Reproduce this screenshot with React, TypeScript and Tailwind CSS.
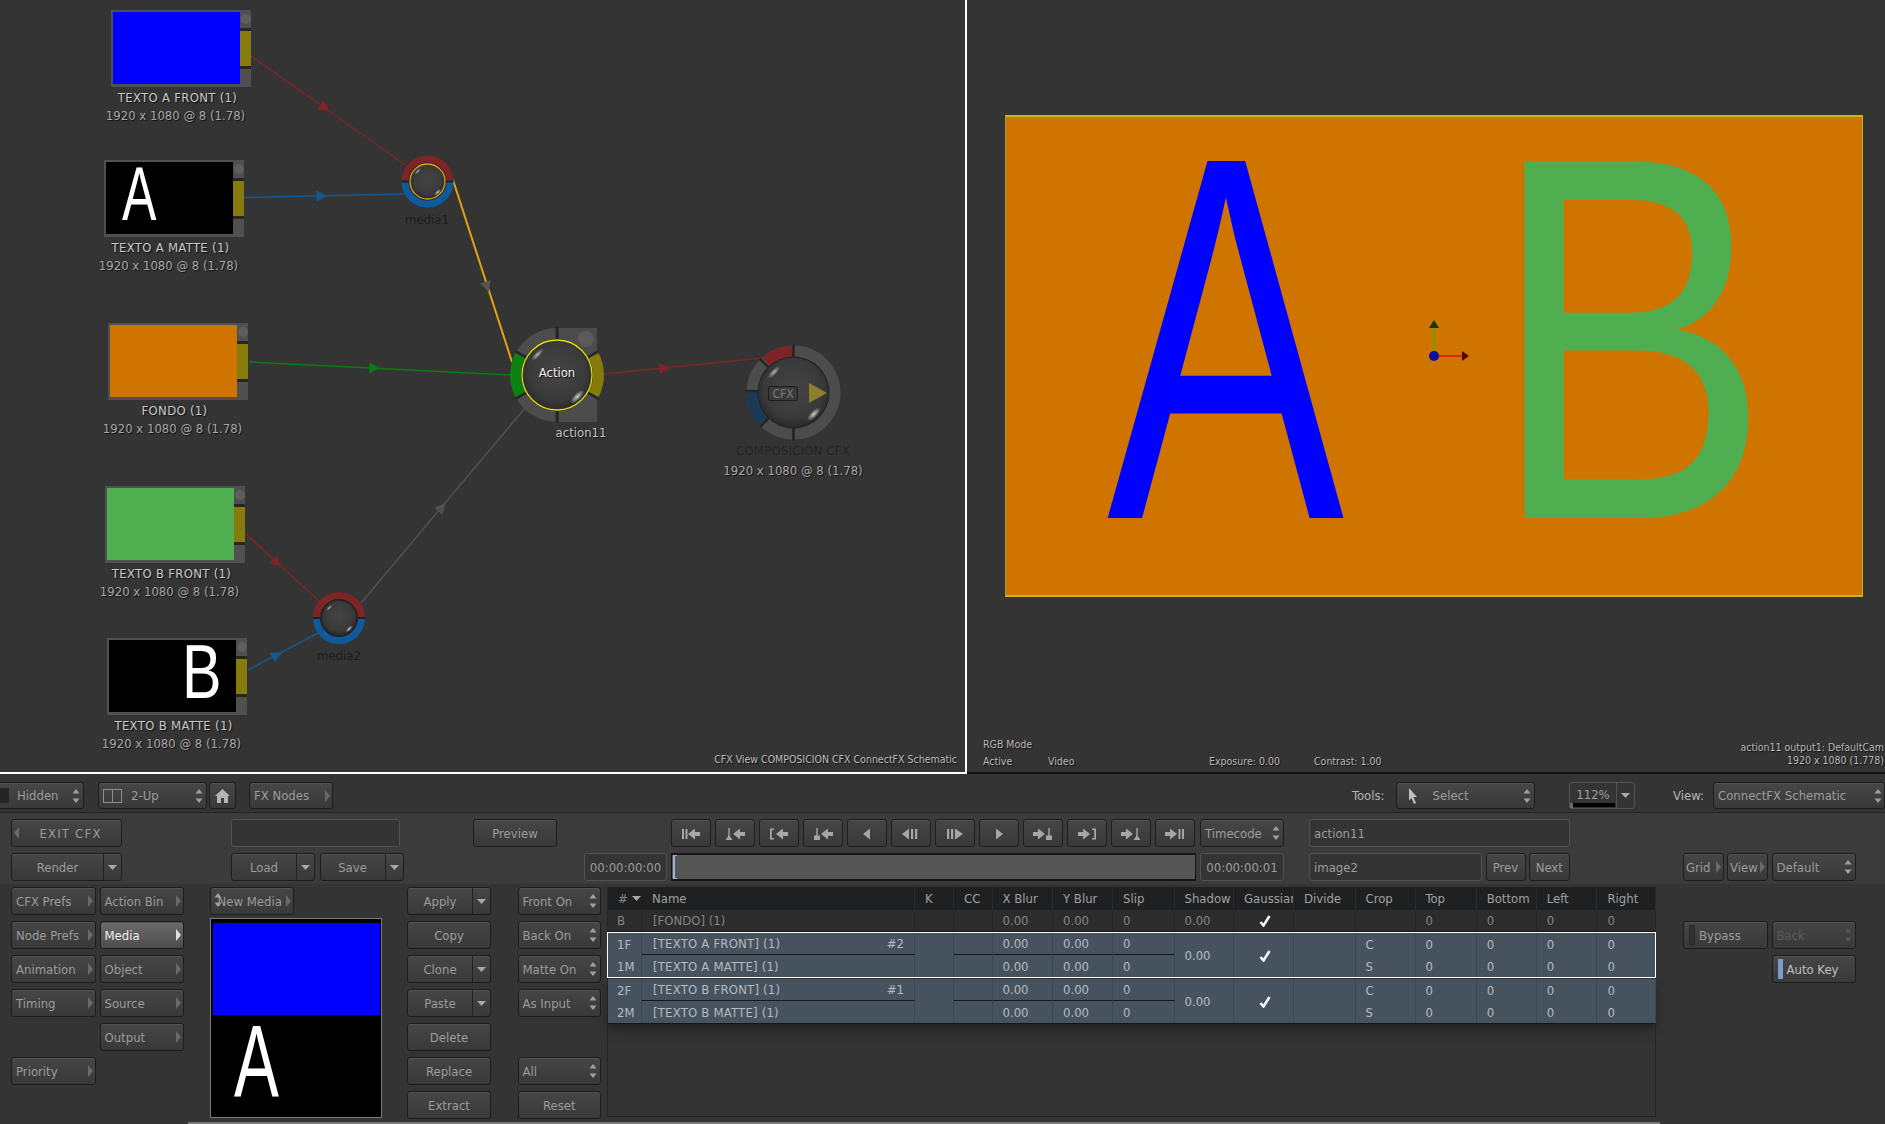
// Flame-style ConnectFX schematic: node canvas, result viewer and the control panel below.
import type { ReactNode } from "react";

const FONT = "font-['DejaVu_Sans_Condensed','DejaVu_Sans',sans-serif] [font-stretch:condensed]";
const BIG = "font-['Liberation_Sans',sans-serif]";
const SHADOW = "[text-shadow:1px_1px_1px_#111]";

/* ---------- little glyphs ---------- */

function Spin({ dim }: { dim?: boolean }) {
  const c = dim ? "#555" : "#a0a0a0";
  return (
    <svg width="8" height="14" viewBox="0 0 8 14" className="shrink-0">
      <path d="M4 0 L7.5 4.5 H.5 Z" fill={c} />
      <path d="M4 14 L7.5 9.5 H.5 Z" fill={c} />
    </svg>
  );
}

function RightTri({ light }: { light?: boolean }) {
  return (
    <svg width="5" height="12" viewBox="0 0 5 12" className="shrink-0">
      <path d="M0 0 L5 6 L0 12 Z" fill={light ? "#e0e0e0" : "#6a6a6a"} />
    </svg>
  );
}

function DownTri() {
  return (
    <svg width="9" height="5" viewBox="0 0 9 5">
      <path d="M0 0 H9 L4.5 5 Z" fill="#a8a8a8" />
    </svg>
  );
}

type BtnProps = {
  label?: ReactNode;
  w: string;
  kind?: "plain" | "arrow" | "spin" | "drop";
  active?: boolean;
  dim?: boolean;
  h?: string;
  className?: string;
};

function Btn({ label, w, kind = "plain", active, dim, h = "h-7", className = "" }: BtnProps) {
  const skin = active
    ? "from-[#6c6c6c] to-[#4c4c4c] text-[#f0f0f0]"
    : "from-[#464646] to-[#393939] " + (dim ? "text-[#5c5c5c]" : "text-[#9c9c9c]");
  const base = `${w} ${h} ${className} shrink-0 flex items-center rounded-[3px] border border-[#1d1d1d] bg-gradient-to-b ${skin} shadow-[inset_0_1px_0_#525252] text-[13px]`;
  // the taller panel buttons sit their text a pixel lower than the top bar
  const nudge = h === "h-7" ? "relative top-[1px]" : "";
  if (kind === "drop") {
    return (
      <div className={base}>
        <div className={`flex-1 text-center ${nudge}`}>{label}</div>
        <div className="w-[18px] h-full border-l border-[#222] flex items-center justify-center">
          <DownTri />
        </div>
      </div>
    );
  }
  if (kind === "arrow") {
    return (
      <div className={`${base} pl-1 pr-[2px] justify-between whitespace-nowrap`}>
        <span className={nudge}>{label}</span>
        <RightTri light={active} />
      </div>
    );
  }
  if (kind === "spin") {
    return (
      <div className={`${base} pl-1 pr-[3px] justify-between`}>
        <span className={nudge}>{label}</span>
        <Spin dim={dim} />
      </div>
    );
  }
  return (
    <div className={`${base} justify-center`}>
      <span className={`flex ${nudge}`}>{label}</span>
    </div>
  );
}

function Field({ w, text, center }: { w: string; text?: string; center?: boolean }) {
  return (
    <div
      className={`${w} h-7 shrink-0 flex items-center rounded-[3px] border border-[#525252] bg-[#343434] text-[13px] text-[#9c9c9c] ${
        center ? "justify-center" : "pl-1"
      }`}
    >
      <span className="relative top-[1px]">{text}</span>
    </div>
  );
}

/* ---------- transport icons ---------- */

const G = "#a6a6a6";
const arrowL = (x: number) => `M${x} 7 L${x + 7} 1.5 V5 H${x + 12} V9 H${x + 7} V12.5 Z`;
const arrowR = (x: number) => `M${x + 12} 7 L${x + 5} 1.5 V5 H${x} V9 H${x + 5} V12.5 Z`;

const TRANSPORT: ReactNode[] = [
  <>
    <rect x="3" y="2" width="2" height="10" fill={G} />
    <rect x="6.5" y="2" width="2" height="10" fill={G} />
    <path d={arrowL(9)} fill={G} />
  </>,
  <>
    <rect x="5.3" y="1" width="1.4" height="9" fill={G} />
    <path d="M2.5 13 L6 8 L9.5 13 Z" fill={G} />
    <path d={arrowL(10)} fill={G} />
  </>,
  <>
    <path d="M3 1.5 H7 V3 H4.8 V11 H7 V12.5 H3 Z" fill={G} />
    <path d={arrowL(9)} fill={G} />
  </>,
  <>
    <rect x="5.3" y="1" width="1.4" height="8" fill={G} />
    <rect x="3" y="8.5" width="6" height="4.5" fill={G} />
    <path d={arrowL(10)} fill={G} />
  </>,
  <path d="M8 7 L15 1.5 V12.5 Z" fill={G} />,
  <>
    <path d="M3 7 L10 1.5 V12.5 Z" fill={G} />
    <rect x="12" y="2" width="2.2" height="10" fill={G} />
    <rect x="16" y="2" width="2.2" height="10" fill={G} />
  </>,
  <>
    <rect x="4" y="2" width="2.2" height="10" fill={G} />
    <rect x="8" y="2" width="2.2" height="10" fill={G} />
    <path d="M12 1.5 L20 7 L12 12.5 Z" fill={G} />
  </>,
  <path d="M9 1.5 L16 7 L9 12.5 Z" fill={G} />,
  <>
    <path d={arrowR(2)} fill={G} />
    <rect x="17.3" y="1" width="1.4" height="8" fill={G} />
    <rect x="15" y="8.5" width="6" height="4.5" fill={G} />
  </>,
  <>
    <path d={arrowR(3)} fill={G} />
    <path d="M21 1.5 H17 V3 H19.2 V11 H17 V12.5 H21 Z" fill={G} />
  </>,
  <>
    <path d={arrowR(2)} fill={G} />
    <rect x="17.3" y="1" width="1.4" height="9" fill={G} />
    <path d="M14.5 13 L18 8 L21.5 13 Z" fill={G} />
  </>,
  <>
    <path d={arrowR(2)} fill={G} />
    <rect x="15.5" y="2" width="2" height="10" fill={G} />
    <rect x="19" y="2" width="2" height="10" fill={G} />
  </>,
];

/* ---------- schematic ---------- */

type Wire = { from: [number, number]; to: [number, number]; at: [number, number]; c: string; arrow?: string; sw?: number };

const WIRES: Wire[] = [
  { from: [251, 56], to: [407, 166], at: [325, 108], c: "#7e2426" },
  { from: [244, 197.5], to: [405, 194], at: [322, 196], c: "#14588f" },
  { from: [453, 180], to: [512, 362], at: [487, 287], c: "#e6a110", arrow: "#565650", sw: 2 },
  { from: [249, 362], to: [511, 375], at: [375, 368], c: "#0c7a12" },
  { from: [361, 603], to: [525, 408], at: [442, 507], c: "#505050" },
  { from: [245, 533], to: [320, 602], at: [277, 563], c: "#7e2426" },
  { from: [248, 670], to: [318, 633], at: [277, 655], c: "#14588f" },
  { from: [604, 374], to: [763, 358], at: [665, 368], c: "#7e2426" },
];

function arrowHead(w: Wire) {
  const dx = w.to[0] - w.from[0];
  const dy = w.to[1] - w.from[1];
  const l = Math.hypot(dx, dy);
  const ux = dx / l;
  const uy = dy / l;
  const [x, y] = w.at;
  return [
    [x + ux * 5.5, y + uy * 5.5],
    [x - ux * 5.5 - uy * 5.5, y - uy * 5.5 + ux * 5.5],
    [x - ux * 5.5 + uy * 5.5, y - uy * 5.5 - ux * 5.5],
  ]
    .map((p) => p.join(","))
    .join(" ");
}

function arc(cx: number, cy: number, r: number, a0: number, a1: number) {
  const p = (a: number) => [cx + r * Math.cos((a * Math.PI) / 180), cy - r * Math.sin((a * Math.PI) / 180)];
  const [x0, y0] = p(a0);
  const [x1, y1] = p(a1);
  const large = Math.abs(a1 - a0) > 180 ? 1 : 0;
  return `M${x0} ${y0} A${r} ${r} 0 ${large} 0 ${x1} ${y1}`;
}

function Ball({ cx, cy, r, ring }: { cx: number; cy: number; r: number; ring?: string }) {
  const tx = cx - r * 0.56;
  const ty = cy - r * 0.58;
  const bx = cx + r * 0.58;
  const by = cy + r * 0.62;
  return (
    <g>
      <circle cx={cx} cy={cy} r={r + 1} fill="#222" />
      <circle cx={cx} cy={cy} r={r} fill="url(#ballBase)" />
      <ellipse cx={tx} cy={ty} rx={r * 0.24} ry={r * 0.08} fill="url(#ballGlint)" opacity={0.7} transform={`rotate(-45 ${tx} ${ty})`} />
      <ellipse cx={bx} cy={by} rx={r * 0.26} ry={r * 0.1} fill="url(#ballGlint)" opacity={0.85} transform={`rotate(-45 ${bx} ${by})`} />
      {ring && <circle cx={cx} cy={cy} r={r} fill="none" stroke={ring} strokeWidth={1.3} />}
    </g>
  );
}

function MediaRing({ cx, cy, ring }: { cx: number; cy: number; ring?: string }) {
  return (
    <g>
      <circle cx={cx} cy={cy} r={21} fill="#222" />
      <path d={arc(cx, cy, 22.5, 0, 180)} fill="none" stroke="#7e2426" strokeWidth={7} />
      <path d={arc(cx, cy, 22.5, 180, 360)} fill="none" stroke="#0f5a9c" strokeWidth={7} />
      <rect x={cx - 26} y={cy - 1} width={52} height={2} fill="#222" />
      <Ball cx={cx} cy={cy} r={17.5} ring={ring} />
    </g>
  );
}

function Tick({ cx, cy, a }: { cx: number; cy: number; a: number }) {
  const c = Math.cos((a * Math.PI) / 180);
  const s = Math.sin((a * Math.PI) / 180);
  return <line x1={cx + 34 * c} y1={cy - 34 * s} x2={cx + 48 * c} y2={cy - 48 * s} stroke="#262626" strokeWidth={2.4} />;
}

function Diagram() {
  return (
    <svg width="966" height="772" className="absolute left-0 top-0">
      <defs>
        <radialGradient id="ballBase" cx="50%" cy="45%" r="58%">
          <stop offset="0%" stopColor="#454545" />
          <stop offset="70%" stopColor="#3a3a3a" />
          <stop offset="100%" stopColor="#262626" />
        </radialGradient>
        <radialGradient id="ballGlint">
          <stop offset="0%" stopColor="#e8e8e8" />
          <stop offset="100%" stopColor="#e8e8e8" stopOpacity="0" />
        </radialGradient>
      </defs>

      {WIRES.map((w, i) => (
        <g key={i}>
          <line x1={w.from[0]} y1={w.from[1]} x2={w.to[0]} y2={w.to[1]} stroke={w.c} strokeWidth={w.sw ?? 1.5} />
          <polygon points={arrowHead(w)} fill={w.arrow ?? w.c} />
        </g>
      ))}

      <MediaRing cx={427.5} cy={181.5} ring="#e6a110" />
      <MediaRing cx={339} cy={618} />

      {/* Action node */}
      <path d="M559 328 H597 V352 L559 375 Z" fill="#4c4c4c" />
      <path d="M559 422 H597 V398 L559 375 Z" fill="#4c4c4c" />
      <circle cx={586} cy={339} r={8} fill="#5a5a5a" />
      <path d={arc(557, 375, 41, 92, 150)} fill="none" stroke="#4c4c4c" strokeWidth={12} />
      <path d={arc(557, 375, 41, 210, 268)} fill="none" stroke="#4c4c4c" strokeWidth={12} />
      <path d={arc(557, 375, 41, 152, 208)} fill="none" stroke="#0c8212" strokeWidth={12} />
      <path d={arc(557, 375, 41, -28, 28)} fill="none" stroke="#857a0c" strokeWidth={12} />
      {[90, 150, 210, 270, 30, -30].map((a) => (
        <Tick key={a} cx={557} cy={375} a={a} />
      ))}
      <Ball cx={557} cy={375} r={35} ring="#e4e00c" />

      {/* CFX output node */}
      <path d={arc(793.5, 392.5, 41, 92, 268)} fill="none" stroke="#4c4c4c" strokeWidth={12} />
      <path d={arc(793.5, 392.5, 41, -88, 88)} fill="none" stroke="#4c4c4c" strokeWidth={12} />
      <path d={arc(793.5, 392.5, 41, 92, 132)} fill="none" stroke="#7e2426" strokeWidth={12} />
      <path d={arc(793.5, 392.5, 41, 178, 225)} fill="none" stroke="#1c3a55" strokeWidth={12} />
      {[90, 135, 178, 226, 270].map((a) => (
        <Tick key={a} cx={793.5} cy={392.5} a={a} />
      ))}
      <Ball cx={793.5} cy={392.5} r={35} />
      <polygon points="809,383 827,393 809,403" fill="#8d7f2a" />
    </svg>
  );
}

function Thumb({
  left,
  top,
  fill,
  children,
  title,
}: {
  left: string;
  top: string;
  fill: string;
  children?: ReactNode;
  title: string;
}) {
  return (
    <div className={`absolute ${left} ${top} w-[140px]`}>
      <div className="flex h-[77px] bg-[#505050] pl-[2px] pt-[2px] pb-[3px]">
        <div className={`relative w-[127px] ${fill}`}>{children}</div>
        <div className="flex-1 -mt-[2px] -mb-[3px] flex flex-col bg-[#262626]">
          <div className="h-[18px] bg-[#4f4f4f] flex items-center justify-center">
            <div className="size-[10px] rounded-full bg-[#5e5e5e]" />
          </div>
          <div className="h-[35px] mt-[3px] bg-[#867b0c]" />
          <div className="h-[18px] mt-[3px] bg-[#505050]" />
        </div>
      </div>
      <div className={`w-[127px] ml-[2px] mt-[2px] flex flex-col items-center whitespace-nowrap leading-[18px] text-[13px] ${SHADOW}`}>
        <span className="text-[#c8c8c8] tracking-[.3px] translate-x-[1px]">{title}</span>
        <span className="text-[#a6a6a6] -translate-x-[1px]">1920 x 1080 @ 8 (1.78)</span>
      </div>
    </div>
  );
}

function CanvasPane() {
  return (
    <div className="relative w-[967px] border-r-2 border-b-2 border-white">
      <Diagram />
      <Thumb left="left-[111px]" top="top-[10px]" fill="bg-[#0000ff]" title="TEXTO A FRONT (1)" />
      <Thumb left="left-[104px]" top="top-[160px]" fill="bg-black" title="TEXTO A MATTE (1)">
        <span className={`absolute left-[16px] top-[5px] text-[76px] leading-[.7] text-white origin-left scale-x-[.68] ${BIG}`}>A</span>
      </Thumb>
      <Thumb left="left-[108px]" top="top-[323px]" fill="bg-[#d07400]" title="FONDO (1)" />
      <Thumb left="left-[105px]" top="top-[486px]" fill="bg-[#4faf50]" title="TEXTO B FRONT (1)" />
      <Thumb left="left-[107px]" top="top-[638px]" fill="bg-black" title="TEXTO B MATTE (1)">
        <span className={`absolute left-[73px] top-[5px] text-[76px] leading-[.7] text-white origin-left scale-x-[.78] ${BIG}`}>B</span>
      </Thumb>

      <span className="absolute left-[380px] w-[94px] top-[210px] text-center text-[13px] text-[#1c1c1c]">media1</span>
      <span className="absolute left-[292px] w-[94px] top-[646px] text-center text-[13px] text-[#1c1c1c]">media2</span>
      <span className={`absolute left-[507px] w-[100px] top-[363px] text-center text-[13px] text-[#f0f0f0] ${SHADOW}`}>Action</span>
      <span className={`absolute left-[531px] w-[100px] top-[423px] text-center text-[13px] text-[#c0c0c0] ${SHADOW}`}>action11</span>
      <span className="absolute left-[768px] top-[386px] w-[30px] h-[15px] flex items-center justify-center rounded-[2px] border border-[#1e1e1e] bg-[#3a3a3a] text-[12px] text-[#7a7a7a]">CFX</span>
      <div className="absolute left-[693px] w-[200px] top-[441px] flex flex-col items-center leading-[20px] text-[13px]">
        <span className="text-[#242424] tracking-[.2px]">COMPOSICION CFX</span>
        <span className={`text-[#a6a6a6] ${SHADOW}`}>1920 x 1080 @ 8 (1.78)</span>
      </div>
      <span className={`absolute right-[8px] bottom-[4px] text-[10.5px] text-[#bdbdbd] ${SHADOW}`}>CFX View COMPOSICION CFX ConnectFX Schematic</span>
    </div>
  );
}

function ViewerPane() {
  return (
    <div className="relative flex-1 border-b-2 border-[#111]">
      <div className="absolute left-[38px] top-[115px] w-[858px] h-[482px] bg-[#d07400] border-t-2 border-b-2 border-r border-l border-t-[#c8b820] border-b-[#c8b820] border-r-[#c8b820] border-l-[#a09a50]">
        <span className={`absolute left-[101px] top-[40px] text-[519px] leading-[.7] text-[#0000ff] origin-left scale-x-[.685] ${BIG}`}>A</span>
        <span className={`absolute left-[484px] top-[40px] text-[519px] leading-[.7] text-[#4faf50] origin-left scale-x-[.81] ${BIG}`}>B</span>
        <svg width="60" height="60" className="absolute left-[418px] top-[195px]">
          <line x1="10" y1="44" x2="10" y2="16" stroke="#22c000" strokeWidth="1.2" />
          <line x1="10" y1="44" x2="38" y2="44" stroke="#f00000" strokeWidth="1.4" />
          <polygon points="10,8 15,16 5,16" fill="#103a08" />
          <polygon points="38,39 45,44 38,49" fill="#4a0a0a" />
          <circle cx="10" cy="44" r="5" fill="#0a10a0" />
        </svg>
      </div>
      <div className={`absolute left-[16px] top-[737px] text-[10.5px] text-[#b8b8b8] ${SHADOW}`}>RGB Mode</div>
      <div className={`absolute left-[16px] top-[754px] text-[10.5px] text-[#b8b8b8] ${SHADOW}`}>Active</div>
      <div className={`absolute left-[81px] top-[754px] text-[10.5px] text-[#b8b8b8] ${SHADOW}`}>Video</div>
      <div className={`absolute left-[242px] top-[754px] text-[10.5px] text-[#b8b8b8] ${SHADOW}`}>Exposure: 0.00</div>
      <div className={`absolute left-[347px] top-[754px] text-[10.5px] text-[#b8b8b8] ${SHADOW}`}>Contrast: 1.00</div>
      <div className={`absolute right-[1px] top-[741px] text-right text-[10.5px] leading-[13px] text-[#b8b8b8] ${SHADOW}`}>
        action11 output1: DefaultCam
        <br />
        1920 x 1080 (1.778)
      </div>
    </div>
  );
}

/* ---------- toolbars ---------- */

function TopBar() {
  return (
    <div className="h-[39px] pt-2 flex items-start border-b border-[#252525]">
      <div className="w-[84px] h-[27px] flex items-center rounded-r-[3px] border-y border-r border-[#1d1d1d] bg-gradient-to-b from-[#464646] to-[#393939] text-[13px] text-[#9c9c9c] shadow-[inset_0_1px_0_#525252]">
        <div className="w-[9px] h-[15px] bg-[#242424] border-y-4 border-[#262626] mr-2" />
        <span className="flex-1">Hidden</span>
        <span className="mr-[3px] flex">
          <Spin />
        </span>
      </div>
      <div className="ml-[14px] w-[109px] h-[27px] flex items-center rounded-[3px] border border-[#1d1d1d] bg-gradient-to-b from-[#464646] to-[#393939] text-[13px] text-[#9c9c9c] shadow-[inset_0_1px_0_#525252] pl-1">
        <svg width="20" height="14" viewBox="0 0 20 14" className="mr-2">
          <rect x=".5" y=".5" width="18" height="13" fill="none" stroke="#8c8c8c" />
          <line x1="9.5" y1="0" x2="9.5" y2="14" stroke="#8c8c8c" />
        </svg>
        <span className="flex-1">2-Up</span>
        <span className="mr-[3px] flex">
          <Spin />
        </span>
      </div>
      <Btn
        w="w-[27px] ml-[2px]"
        h="h-[27px]"
        label={
          <svg width="15" height="14" viewBox="0 0 15 14">
            <path d="M7.5 0 L15 7 H13 V14 H9 V9 H6 V14 H2 V7 H0 Z" fill="#b4b4b4" />
          </svg>
        }
      />
      <Btn w="w-[84px] ml-[13px]" h="h-[27px]" kind="arrow" label="FX Nodes" />
      <div className="ml-auto flex items-start text-[13px]">
        <span className="leading-[27px] text-[#b4b4b4] w-[43.5px]">Tools:</span>
        <div className="w-[139px] h-[27px] flex items-center rounded-[3px] border border-[#1d1d1d] bg-gradient-to-b from-[#464646] to-[#393939] text-[#9c9c9c] shadow-[inset_0_1px_0_#525252] pl-[11px] pr-[3px]">
          <svg width="10" height="16" viewBox="0 0 10 16" className="mr-[15px]">
            <path d="M1 0 L9 9 H5.5 L8 15 L6 16 L3.5 10 L1 12.5 Z" fill="#c0c0c0" />
          </svg>
          <span className="flex-1">Select</span>
          <Spin />
        </div>
        <div className="ml-[34.5px] w-[66px] h-[27px] flex rounded-[3px] border border-[#525252] bg-[#343434] text-[#9c9c9c]">
          <div className="flex-1 relative flex justify-center pt-[2px] overflow-hidden">
            112%
            <div className="absolute left-[3px] right-[1px] bottom-[1px] h-[4px] bg-black" />
            <div className="absolute left-0 bottom-0 w-[3px] h-[5px] bg-[#6c6c6c]" />
          </div>
          <div className="w-[18px] border-l border-[#525252] flex items-center justify-center">
            <DownTri />
          </div>
        </div>
        <span className="ml-[38px] leading-[27px] text-[#b4b4b4] w-[40px]">View:</span>
        <div className="w-[172px] h-[27px] flex items-center justify-between rounded-[3px] border border-[#1d1d1d] bg-gradient-to-b from-[#464646] to-[#393939] text-[#9c9c9c] shadow-[inset_0_1px_0_#525252] pl-1 pr-[2px]">
          <span>ConnectFX Schematic</span>
          <Spin />
        </div>
      </div>
    </div>
  );
}

function Band() {
  return (
    <div className="h-[71px] pt-1.5 flex flex-col gap-1.5 bg-[#3b3b3b]">
      <div className="flex pl-[11px]">
        <div className="relative">
          <Btn w="w-[111px]" label={<span className="tracking-[1.2px] pl-2">EXIT CFX</span>} />
          <svg width="5" height="12" viewBox="0 0 5 12" className="absolute left-[3px] top-2">
            <path d="M5 0 L0 6 L5 12 Z" fill="#6a6a6a" />
          </svg>
        </div>
        <Field w="w-[169px] ml-[109px]" />
        <Btn w="w-[84px] ml-[73px]" label="Preview" />
        <div className="ml-[114px] flex gap-1">
          {TRANSPORT.map((icon, i) => (
            <Btn
              key={i}
              w="w-10"
              label={
                <svg width="24" height="14" viewBox="0 0 24 14">
                  {icon}
                </svg>
              }
            />
          ))}
        </div>
        <Btn w="w-[84px] ml-[5px]" kind="spin" label="Timecode" />
        <Field w="w-[260.5px] ml-[25px]" text="action11" />
      </div>
      <div className="flex pl-[11px]">
        <Btn w="w-[111px]" kind="drop" label="Render" />
        <Btn w="w-[84px] ml-[109px]" kind="drop" label="Load" />
        <Btn w="w-[84px] ml-[4.5px]" kind="drop" label="Save" />
        <Field w="w-[83px] ml-[180.5px]" text="00:00:00:00" center />
        <div className="ml-[3.5px] w-[525px] h-7 border-y-2 border-l border-r border-[#151515] bg-[#555] relative">
          <div className="absolute left-[1px] top-0 bottom-0 w-[4px] border-l-2 border-y border-[#9fb4d2]" />
        </div>
        <Field w="w-[84px] ml-[4.5px]" text="00:00:00:01" center />
        <Field w="w-[173px] ml-[25px]" text="image2" />
        <Btn w="w-10 ml-[3.5px]" label="Prev" />
        <Btn w="w-[40.5px] ml-[3.5px]" label="Next" />
        <Btn w="w-[41px] ml-[113.5px]" kind="arrow" label={<span className="-ml-[2px]">Grid</span>} />
        <Btn w="w-[41px] ml-[3px]" kind="arrow" label={<span className="-ml-[2px]">View</span>} />
        <Btn w="w-[84px] ml-[3.5px]" kind="spin" label="Default" />
      </div>
    </div>
  );
}

/* ---------- media table ---------- */

const COLS =
  "grid grid-cols-[34px_273px_39px_38.5px_60.5px_60px_61.5px_59.5px_60px_61.5px_60px_61.2px_60px_60.8px_58.5px]";

const HEAD = ["", "Name", "K", "CC", "X Blur", "Y Blur", "Slip", "Shadow", "Gaussian", "Divide", "Crop", "Top", "Bottom", "Left", "Right"];

const cell = "flex items-center pl-2.5 whitespace-nowrap border-r";
const body = `${cell} pt-[1px]`;
const blueCell = `${body} border-[#3c4856]`;
const blueLine = `${blueCell} border-b border-b-[#14181c]`;
const darkCell = `${body} border-[#262626]`;

function Check() {
  return (
    <svg width="12" height="12" viewBox="0 0 12 12">
      <path d="M1.5 7 L4.5 10.5 L10.5 1" fill="none" stroke="#f2f2f2" strokeWidth="2.6" />
    </svg>
  );
}

function Group({ a, b, tag, nameA, nameB, selected }: { a: string; b: string; tag: string; nameA: string; nameB: string; selected?: boolean }) {
  return (
    <div
      className={`${COLS} grid-rows-[22px_22px] bg-[#46535f] text-[#b4bac0] relative ${
        selected ? "z-10 outline-[1.5px] outline-white -outline-offset-[0.5px]" : ""
      }`}
    >
      <div className={`${blueCell} pl-[9px]`}>{a}</div>
      <div className={`${blueLine} justify-between pr-2.5 pl-[11px]`}>
        <span className="tracking-[.2px]">{nameA}</span>
        <span>{tag}</span>
      </div>
      <div className={`${blueCell} row-span-2`} />
      <div className={blueLine} />
      <div className={blueLine}>0.00</div>
      <div className={blueLine}>0.00</div>
      <div className={blueLine}>0</div>
      <div className={`${blueCell} row-span-2`}>0.00</div>
      <div className={`${blueCell} row-span-2 justify-center pl-0 pr-2`}>
        <Check />
      </div>
      <div className={`${blueCell} row-span-2`} />
      <div className={blueCell}>C</div>
      <div className={blueCell}>0</div>
      <div className={blueCell}>0</div>
      <div className={blueCell}>0</div>
      <div className={blueCell}>0</div>

      <div className={`${blueCell} pl-[9px]`}>{b}</div>
      <div className={`${blueCell} pl-[11px]`}>
        <span className="tracking-[.2px]">{nameB}</span>
      </div>
      <div className={blueCell} />
      <div className={blueCell}>0.00</div>
      <div className={blueCell}>0.00</div>
      <div className={blueCell}>0</div>
      <div className={blueCell}>S</div>
      <div className={blueCell}>0</div>
      <div className={blueCell}>0</div>
      <div className={blueCell}>0</div>
      <div className={blueCell}>0</div>
    </div>
  );
}

function MediaTable() {
  return (
    <div className="ml-1.5 w-[1049px] h-[230px] shrink-0 border-r border-b border-l border-[#262626] text-[13px] flex flex-col">
      <div className={`${COLS} h-[23px] bg-[#1f2022] text-[#a0a0a0]`}>
        {HEAD.map((h, i) =>
          i === 0 ? (
            <div key={i} className="flex items-center gap-1 pl-2.5 text-[#888]">
              #
              <DownTri />
            </div>
          ) : (
            <div key={i} className={`${cell} overflow-hidden border-[#2a2a2c] ${i === 8 ? "pl-2" : ""}`}>
              {h}
            </div>
          ),
        )}
      </div>
      <div className={`${COLS} h-[22px] bg-[#2c2c2c] text-[#858585] border-b border-[#141414]`}>
        <div className={`${darkCell} pl-[9px]`}>B</div>
        <div className={`${darkCell} pl-[11px]`}>[FONDO] (1)</div>
        <div className={darkCell} />
        <div className={darkCell} />
        <div className={darkCell}>0.00</div>
        <div className={darkCell}>0.00</div>
        <div className={darkCell}>0</div>
        <div className={darkCell}>0.00</div>
        <div className={`${darkCell} justify-center pl-0 pr-2`}>
          <Check />
        </div>
        <div className={darkCell} />
        <div className={darkCell} />
        <div className={darkCell}>0</div>
        <div className={darkCell}>0</div>
        <div className={darkCell}>0</div>
        <div className={darkCell}>0</div>
      </div>
      <div className="mt-[1px]">
        <Group a="1F" b="1M" tag="#2" nameA="[TEXTO A FRONT] (1)" nameB="[TEXTO A MATTE] (1)" selected />
      </div>
      <div className="mt-[2px] border-b border-[#10161c] shadow-[0_6px_10px_#222]">
        <Group a="2F" b="2M" tag="#1" nameA="[TEXTO B FRONT] (1)" nameB="[TEXTO B MATTE] (1)" />
      </div>
    </div>
  );
}

/* ---------- lower panel ---------- */

function LowerPanel() {
  return (
    <div className="flex-1 flex pl-[11px] pt-[3px]">
      <div className="flex flex-col gap-1.5 w-[84.5px] shrink-0">
        <Btn w="w-full" kind="arrow" label="CFX Prefs" />
        <Btn w="w-full" kind="arrow" label="Node Prefs" />
        <Btn w="w-full" kind="arrow" label="Animation" />
        <Btn w="w-full" kind="arrow" label="Timing" />
        <div className="h-7" />
        <Btn w="w-full" kind="arrow" label="Priority" />
      </div>
      <div className="ml-1 flex flex-col gap-1.5 w-[84px] shrink-0">
        <Btn w="w-full" kind="arrow" label="Action Bin" />
        <Btn w="w-full" kind="arrow" label="Media" active />
        <Btn w="w-full" kind="arrow" label="Object" />
        <Btn w="w-full" kind="arrow" label="Source" />
        <Btn w="w-full" kind="arrow" label="Output" />
      </div>
      <div className="ml-[26px] w-[172px] shrink-0 flex flex-col">
        <div className="relative w-[84px]">
          <Btn w="w-full" kind="arrow" label={<span className="pl-[3px]">New Media</span>} />
          <span className="absolute left-[4px] top-[6px] flex">
            <Spin />
          </span>
        </div>
        <div className="mt-[3px] h-[200px] border border-[#7a7a7a] bg-black pt-[4px] pl-[2px] pr-[1px] flex flex-col relative">
          <div className="h-[92px] bg-[#0000ff]" />
          <span className={`absolute left-[23px] top-[108px] text-[102px] leading-[.7] text-white origin-left scale-x-[.66] ${BIG}`}>A</span>
        </div>
      </div>
      <div className="ml-[25.5px] flex flex-col gap-1.5 w-[84px] shrink-0">
        <Btn w="w-full" kind="drop" label="Apply" />
        <Btn w="w-full" label="Copy" />
        <Btn w="w-full" kind="drop" label="Clone" />
        <Btn w="w-full" kind="drop" label="Paste" />
        <Btn w="w-full" label="Delete" />
        <Btn w="w-full" label="Replace" />
        <Btn w="w-full" label="Extract" />
      </div>
      <div className="ml-[26.5px] flex flex-col gap-1.5 w-[83.5px] shrink-0">
        <Btn w="w-full" kind="spin" label="Front On" />
        <Btn w="w-full" kind="spin" label="Back On" />
        <Btn w="w-full" kind="spin" label="Matte On" />
        <Btn w="w-full" kind="spin" label="As Input" />
        <div className="h-7" />
        <Btn w="w-full" kind="spin" label="All" />
        <Btn w="w-full" label="Reset" />
      </div>
      <MediaTable />
      <div className="ml-[27px] mt-[34px] w-[172.5px] flex flex-col gap-1.5 shrink-0">
        <div className="flex gap-1">
          <div className="w-[84.5px] h-7 flex items-center gap-1 pl-[5px] rounded-[3px] border border-[#1d1d1d] bg-gradient-to-b from-[#464646] to-[#393939] text-[13px] text-[#9c9c9c] shadow-[inset_0_1px_0_#525252]">
            <div className="w-[6px] h-[20px] bg-[#303030] border border-[#2a2a2a]" />
            <span className="relative top-[1px]">Bypass</span>
          </div>
          <Btn w="w-[84px]" kind="spin" label="Back" dim />
        </div>
        <div className="flex justify-end">
          <div className="w-[84px] h-7 flex items-center gap-1 pl-[5px] rounded-[3px] border border-[#1d1d1d] bg-gradient-to-b from-[#464646] to-[#393939] text-[13px] text-[#c0c0c0] shadow-[inset_0_1px_0_#525252]">
            <div className="w-[5px] h-[20px] bg-[#7a9cc6]" />
            <span className="relative top-[1px]">Auto Key</span>
          </div>
        </div>
      </div>
    </div>
  );
}

export default function App() {
  return (
    <div className={`w-[1885px] h-[1124px] flex flex-col overflow-hidden bg-[#343434] ${FONT}`}>
      <div className="h-[774px] flex shrink-0">
        <CanvasPane />
        <ViewerPane />
      </div>
      <TopBar />
      <Band />
      <LowerPanel />
      <div className="ml-[188px] w-[1472px] h-[2px] bg-[#777]" />
    </div>
  );
}
